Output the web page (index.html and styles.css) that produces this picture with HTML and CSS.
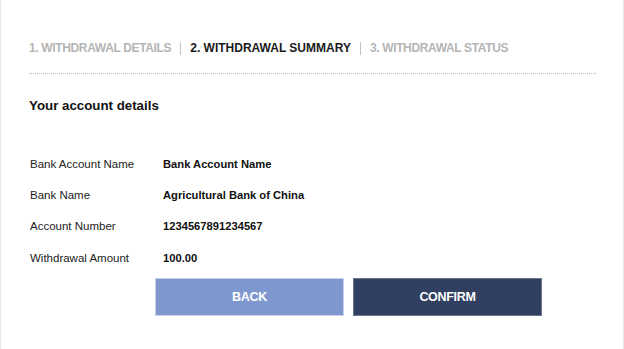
FILE: index.html
```html
<!DOCTYPE html>
<html>
<head>
<meta charset="utf-8">
<link rel="stylesheet" href="styles.css">
</head>
<body>
<div class="panel">
  <nav class="steps">
    <span class="step">1. WITHDRAWAL DETAILS</span>
    <span class="sep"></span>
    <span class="step active">2. WITHDRAWAL SUMMARY</span>
    <span class="sep"></span>
    <span class="step">3. WITHDRAWAL STATUS</span>
  </nav>
  <div class="rule"></div>
  <h2 class="title">Your account details</h2>
  <div class="details">
    <div class="label">Bank Account Name</div><div class="value">Bank Account Name</div>
    <div class="label">Bank Name</div><div class="value">Agricultural Bank of China</div>
    <div class="label">Account Number</div><div class="value">1234567891234567</div>
    <div class="label">Withdrawal Amount</div><div class="value">100.00</div>
  </div>
  <div class="actions">
    <button class="btn back">BACK</button>
    <button class="btn confirm">CONFIRM</button>
  </div>
</div>
</body>
</html>
```
FILE: styles.css
```css
html, body {
  margin: 0;
  padding: 0;
  background: #fff;
}
body {
  font-family: "Liberation Sans", Arial, sans-serif;
  color: #111;
}
.panel {
  box-sizing: border-box;
  width: 624px;
  height: 349px;
  border-left: 1px solid #e6e6e6;
  border-right: 1px solid #e6e6e6;
  padding: 39px 27px 0 28px;
}
.steps {
  display: flex;
  align-items: center;
  height: 18px;
  font-size: 12px;
  font-weight: bold;
  letter-spacing: -0.35px;
  white-space: nowrap;
}
.step {
  color: #b5b5b5;
}
.step.active {
  color: #1a1a1a;
  letter-spacing: 0;
}
.sep {
  width: 1px;
  height: 13px;
  background: #c4c4c4;
  margin: 0 9px 0 9px;
}
.rule {
  margin-top: 16px;
  border-top: 1px dotted #b8b8b8;
}
.title {
  margin: 23px 0 0 0;
  font-size: 13.3px;
  font-weight: bold;
  color: #111;
  line-height: 18px;
}
.details {
  display: grid;
  grid-template-columns: 133px auto;
  grid-auto-rows: 31.33px;
  align-items: center;
  margin: 33px 0 0 1px;
  font-size: 11.5px;
}
.label {
  color: #222;
}
.value {
  font-size: 11.2px;
  font-weight: bold;
  color: #111;
}
.actions {
  display: flex;
  gap: 9px;
  margin: 5px 0 0 126px;
}
.btn {
  width: 189px;
  height: 38px;
  border: 1px solid #c9d1ea;
  font-family: inherit;
  font-size: 12.5px;
  font-weight: bold;
  letter-spacing: -0.3px;
  color: #fff;
  padding: 0;
}
.back {
  background: #7e97cf;
}
.confirm {
  background: #313f60;
  border-color: #6b7691;
}
```
